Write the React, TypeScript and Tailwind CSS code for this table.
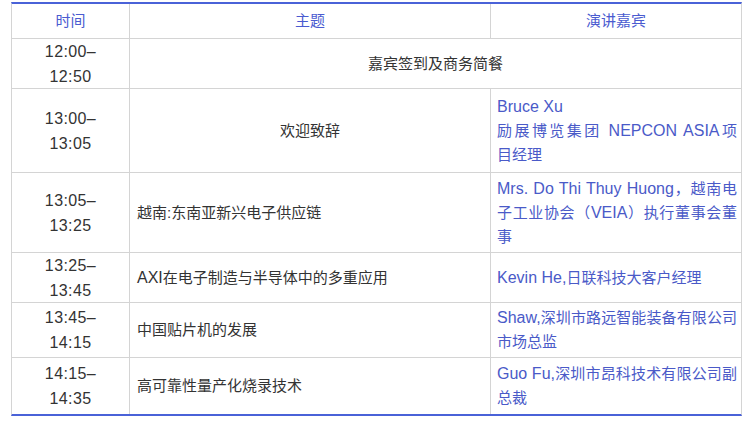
type Line = { t: string; j?: boolean };

const rows: {
  time: string[];
  topic: string;
  span?: boolean;
  center?: boolean;
  speaker?: Line[];
  h: string;
}[] = [
  { time: ["12:00–", "12:50"], topic: "嘉宾签到及商务简餐", span: true, h: "h-[50px]" },
  {
    time: ["13:00–", "13:05"],
    topic: "欢迎致辞",
    center: true,
    speaker: [{ t: "Bruce Xu" }, { t: "励展博览集团 NEPCON ASIA项", j: true }, { t: "目经理" }],
    h: "h-[84px]",
  },
  {
    time: ["13:05–", "13:25"],
    topic: "越南:东南亚新兴电子供应链",
    speaker: [
      { t: "Mrs. Do Thi Thuy Huong，越南电", j: true },
      { t: "子工业协会（VEIA）执行董事会董", j: true },
      { t: "事" },
    ],
    h: "h-[80px]",
  },
  {
    time: ["13:25–", "13:45"],
    topic: "AXI在电子制造与半导体中的多重应用",
    speaker: [{ t: "Kevin He,日联科技大客户经理" }],
    h: "h-[50px]",
  },
  {
    time: ["13:45–", "14:15"],
    topic: "中国贴片机的发展",
    speaker: [{ t: "Shaw,深圳市路远智能装备有限公司", j: true }, { t: "市场总监" }],
    h: "h-[55px]",
  },
  {
    time: ["14:15–", "14:35"],
    topic: "高可靠性量产化烧录技术",
    speaker: [{ t: "Guo Fu,深圳市昂科技术有限公司副", j: true }, { t: "总裁" }],
    h: "h-[56px]",
  },
];

// latin runs render a touch larger than the CJK around them
function Mixed({ text }: { text: string }) {
  const parts = text.split(/([A-Za-z0-9.,:\- ]+)/);
  return (
    <>
      {parts.map((p, i) =>
        /[A-Za-z0-9]/.test(p) ? (
          <span key={i} className="text-[16px]">{p}</span>
        ) : (
          <span key={i}>{p}</span>
        )
      )}
    </>
  );
}

export default function App() {
  return (
    <div
      className="w-[750px] h-[424px] bg-white pt-[2px] pl-[11px] text-[15px] leading-[24px]"
      style={{ fontFamily: '"Liberation Sans", "Noto Sans CJK SC", sans-serif' }}
    >
      <div className="w-[731px] border-t-2 border-b-2 border-[#4a62d8] border-x border-x-[#d4d4d4]">
        <div className="flex h-[35px] border-b border-[#d4d4d4] text-[#4a5bd0]">
          <div className="w-[118px] flex items-center justify-center border-r border-[#d4d4d4]">时间</div>
          <div className="w-[361px] flex items-center justify-center border-r border-[#d4d4d4]">主题</div>
          <div className="flex-1 flex items-center justify-center">演讲嘉宾</div>
        </div>
        {rows.map((r, i) => (
          <div
            key={i}
            className={`flex ${r.h} ${i < rows.length - 1 ? "border-b border-[#d4d4d4]" : ""}`}
          >
            <div className="w-[118px] flex flex-col items-center justify-center border-r border-[#d4d4d4] text-[#333] text-[16px] tracking-[0.4px] leading-[25px]">
              <div>{r.time[0]}</div>
              <div>{r.time[1]}</div>
            </div>
            {r.span ? (
              <div className="flex-1 flex items-center justify-center text-[#333]">{r.topic}</div>
            ) : (
              <>
                <div
                  className={`w-[361px] flex items-center px-[7px] border-r border-[#d4d4d4] text-[#333] ${r.center ? "justify-center" : ""}`}
                >
                  <div><Mixed text={r.topic} /></div>
                </div>
                <div className="flex-1 flex flex-col justify-center pl-[6px] pr-[4px] text-[#4a5ac8]">
                  {r.speaker!.map((l, k) => (
                    <div
                      key={k}
                      className={`whitespace-nowrap ${l.j ? "text-justify [text-align-last:justify]" : ""}`}
                    >
                      <Mixed text={l.t} />
                    </div>
                  ))}
                </div>
              </>
            )}
          </div>
        ))}
      </div>
    </div>
  );
}
